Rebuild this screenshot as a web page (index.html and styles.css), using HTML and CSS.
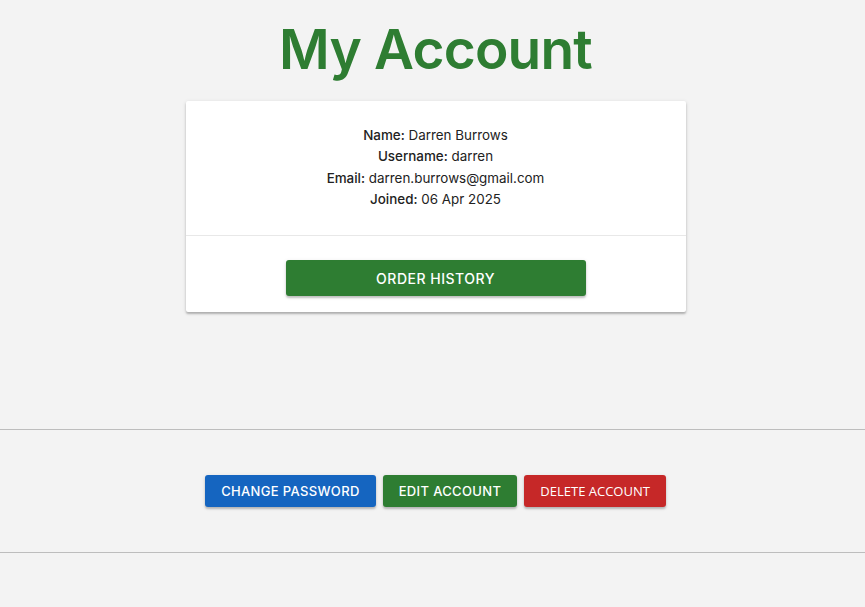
FILE: index.html
```html
<!DOCTYPE html>
<html lang="en">
<head>
<meta charset="utf-8">
<title>My Account</title>
<link rel="stylesheet" href="styles.css">
</head>
<body>
<main class="page">
  <div class="content">
    <h1 class="title">My Account</h1>
    <section class="card">
      <div class="card-info">
        <p><span class="label">Name:</span> Darren Burrows</p>
        <p><span class="label">Username:</span> darren</p>
        <p><span class="label">Email:</span> darren.burrows@gmail.com</p>
        <p><span class="label">Joined:</span> 06 Apr 2025</p>
      </div>
      <div class="card-actions">
        <button class="btn btn-green btn-wide">Order History</button>
      </div>
    </section>
  </div>
  <hr class="rule rule-top">
  <div class="content actions">
    <button class="btn btn-small btn-blue">Change Password</button>
    <button class="btn btn-small btn-green">Edit Account</button>
    <button class="btn btn-small btn-red">Delete Account</button>
  </div>
  <hr class="rule rule-bottom">
</main>
</body>
</html>
```

FILE: styles.css
```css
html, body {
  margin: 0;
  padding: 0;
  background: #f3f3f3;
}
body {
  font-family: Inter, "Noto Sans", sans-serif;
  color: #222;
}
.page {
  display: flex;
  flex-direction: column;
  padding-top: 16px;
}
.content {
  display: flex;
  flex-direction: column;
  align-items: center;
  padding-left: 6px;
}
.title {
  margin: 0;
  font-size: 55px;
  line-height: 66px;
  font-weight: 600;
  letter-spacing: -0.8px;
  color: #2e7d32;
}
.card {
  margin-top: 19px;
  width: 500px;
  background: #fff;
  border-radius: 2px;
  box-shadow: 0 2px 2px rgba(0,0,0,0.22), 0 1px 4px rgba(0,0,0,0.12);
}
.card-info {
  padding: 24px 16px 25px;
  text-align: center;
  font-size: 13.4px;
  line-height: 21.3px;
  border-bottom: 1px solid #e8e8e8;
}
.card-info p {
  margin: 0;
}
.label {
  font-weight: 500;
}
.card-actions {
  display: flex;
  justify-content: center;
  padding: 24px 0 16px;
}
.btn {
  font-family: Inter, "Noto Sans", sans-serif;
  border: none;
  border-radius: 3px;
  color: #fff;
  text-transform: uppercase;
  font-size: 14px;
  font-weight: 500;
  letter-spacing: 0.5px;
  height: 32px;
  padding: 0 16px;
  box-shadow: 0 2px 2px rgba(0,0,0,0.2), 0 1px 4px rgba(0,0,0,0.1);
  cursor: pointer;
}
.btn-wide {
  width: 300px;
  height: 36px;
}
.btn-small {
  font-size: 13px;
  letter-spacing: 0.35px;
}
.btn-green { background: #2e7d32; }
.btn-blue { background: #1565c0; }
.btn-red {
  background: #c62828;
  font-family: "Open Sans", "Noto Sans", sans-serif;
  font-weight: 400;
  letter-spacing: 0;
}
.rule {
  width: 100%;
  margin: 0;
  border: none;
  border-top: 1px solid #bdbdbd;
}
.rule-top {
  margin-top: 117px;
}
.actions {
  flex-direction: row;
  justify-content: center;
  gap: 7px;
  padding-top: 45px;
  padding-bottom: 45px;
}
```
